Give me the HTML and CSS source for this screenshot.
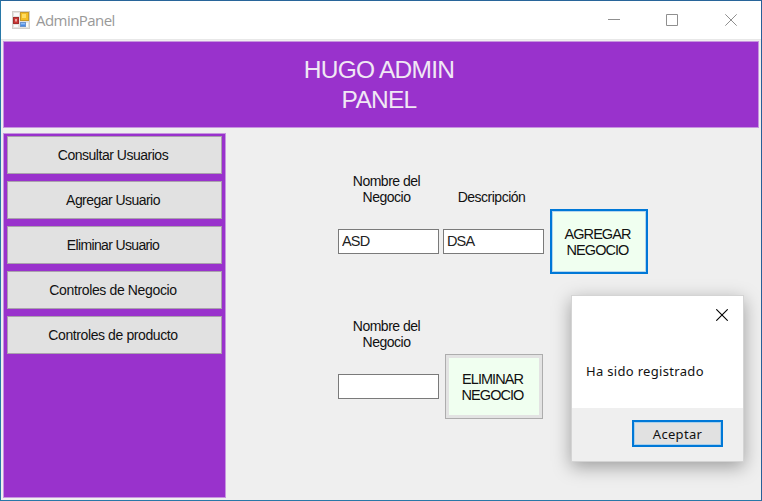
FILE: index.html
```html
<!DOCTYPE html>
<html lang="es">
<head>
<meta charset="utf-8">
<title>AdminPanel</title>
<link rel="stylesheet" href="styles.css">
</head>
<body>
<div class="window">
  <header class="titlebar">
    <svg class="app-icon" width="18" height="18" viewBox="0 0 18 18">
      <rect x=".5" y=".5" width="17" height="17" fill="#e6e3df" stroke="#d2cfcb"/>
      <path d="M2 2h5v3H2zM2 14h4v2H2zM14 12h2v4h-2z" fill="#fafafa"/>
      <rect x="8.500" y="1.500" width="8" height="8" fill="#f4bd25" stroke="#c79a29"/>
      <rect x="10" y="3" width="4" height="4" fill="#ffdc60"/>
      <rect x="1.500" y="6.500" width="5" height="6" fill="#c93634" stroke="#a42c2b"/>
      <rect x="3" y="8" width="2" height="2.500" fill="#eba5a0"/>
      <rect x="8.500" y="11.500" width="5" height="4" fill="#4b8be4" stroke="#6c94cc"/>
      <path d="M9 12h4v1.500H9z" fill="#8fbcf6"/>
    </svg>
    <span class="title">AdminPanel</span>
    <div class="controls">
      <svg width="12" height="12" viewBox="0 0 12 12"><path d="M0 5.500h12"/></svg>
      <svg width="12" height="12" viewBox="0 0 12 12"><path d="M.5.5h11v11H.5z"/></svg>
      <svg width="12" height="12" viewBox="0 0 12 12"><path d="M.3.3l11.400 11.400M11.700.3L.3 11.700"/></svg>
    </div>
  </header>
  <div class="banner"><h1>HUGO ADMIN<br>PANEL</h1></div>
  <div class="body">
    <nav class="sidebar">
      <button class="nav-btn consult">Consultar Usuarios</button>
      <button class="nav-btn add">Agregar Usuario</button>
      <button class="nav-btn remove">Eliminar Usuario</button>
      <button class="nav-btn business">Controles de Negocio</button>
      <button class="nav-btn product">Controles de producto</button>
    </nav>
    <main class="content">
      <section class="form-row">
        <label class="field"><span class="label">Nombre del<br>Negocio</span><input type="text" value="ASD"></label>
        <label class="field"><span class="label">Descripción</span><input type="text" value="DSA"></label>
        <button class="action focused">AGREGAR<br>NEGOCIO</button>
      </section>
      <section class="form-row">
        <label class="field"><span class="label">Nombre del<br>Negocio</span><input type="text"></label>
        <button class="action">ELIMINAR<br>NEGOCIO</button>
      </section>
    </main>
  </div>
  <div class="dialog" role="dialog">
    <div class="dialog-main">
      <svg class="dialog-close" width="12" height="12" viewBox="0 0 12 12"><path d="M.3.3l11.400 11.400M11.700.3L.3 11.700"/></svg>
      <p>Ha sido registrado</p>
    </div>
    <div class="dialog-footer"><button class="accept">Aceptar</button></div>
  </div>
</div>
</body>
</html>
```
FILE: styles.css
```css
* { box-sizing: border-box; }
body { margin: 0; overflow: hidden; font-family: "Liberation Sans", Arial, sans-serif; color: #111; }
button { font: inherit; color: inherit; border-radius: 0; padding: 0; }
.window {
  position: relative; width: 762px; height: 501px; overflow: hidden;
  display: flex; flex-direction: column; background: #efefef;
  border: 1px solid #2878a8; border-top-color: #28659a; border-right-color: #285f98;
}
.titlebar { height: 39px; flex: none; display: flex; align-items: center; background: #fff; padding: 0 24px 0 11px; border-bottom: 1px solid #e8e8e8; }
.app-icon { margin-top: -1px; }
.title { margin-left: 6px; margin-top: -1px; font: 15px "Open Sans", sans-serif; letter-spacing: -.55px; color: #999; }
.controls { margin-left: auto; display: flex; gap: 46px; }
.controls svg { fill: none; stroke: #8f8f8f; stroke-width: 1; }
.controls svg:nth-child(2) { margin-right: 1px; }
.banner {
  height: 87px; flex: none; margin: 1px 2px 0 2px; padding: 13px 4px 0 0;
  background: #9932cc; border: 1px solid #c795df; text-align: center;
}
.banner h1 { margin: 0; font-size: 24.500px; line-height: 30px; font-weight: 400; letter-spacing: -.75px; color: #f0e8f4; }
.body { flex: 1; display: flex; padding: 5px 0 2px 2px; min-height: 0; }
.sidebar {
  width: 223px; flex: none; display: flex; flex-direction: column; gap: 7px;
  background: #9932cc; border: 1px solid #c795df; padding: 2px 3px;
}
.nav-btn { height: 38px; flex: none; background: #e1e1e1; border: 1px solid #aaa1ad; font-size: 14px; padding: 0 3px 0 0; }
.consult { letter-spacing: -.48px; }
.add { letter-spacing: -.54px; }
.remove { letter-spacing: -.64px; }
.business { letter-spacing: -.36px; }
.product { letter-spacing: -.4px; }
.content { flex: 1; padding: 40px 0 0 112px; display: flex; flex-direction: column; gap: 44px; }
.form-row { display: flex; height: 101px; align-items: flex-start; }
.field { width: 101px; margin-right: 4px; display: flex; flex-direction: column; }
.label { height: 32px; margin-bottom: 24px; display: flex; align-items: flex-end; justify-content: center; text-align: center; font-size: 14px; line-height: 16px; letter-spacing: -.5px; padding-right: 4px; }
.field input { width: 101px; height: 25px; border: 1px solid #7a7a7a; background: #fff; padding: 0 3px 2px; font: 14.500px "Liberation Sans", Arial, sans-serif; letter-spacing: -.85px; color: #222; outline: 0; }
.action { width: 98px; height: 65px; margin: 36px 0 0 2px; background: #f0fff0; border: 1px solid #adadad; box-shadow: inset 0 0 0 3px #e3e3e3; font-size: 14.500px; line-height: 16px; letter-spacing: -.95px; padding-right: 3px; }
.focused { border: 2px solid #0078d7; box-shadow: inset 0 0 0 1px #b5d5ed; }
.dialog {
  position: absolute; left: 571px; top: 295px; width: 171px; height: 165px;
  display: flex; flex-direction: column; background: #efefef;
  box-shadow: 0 0 0 1px #d4d4d4, 0 5px 17px 1px rgba(0,0,0,.34);
}
.dialog-main { height: 112px; background: #fff; padding: 13px 14px; display: flex; flex-direction: column; }
.dialog-close { align-self: flex-end; margin-right: 1px; stroke: #000; fill: none; stroke-width: 1.100; }
.dialog p { margin: 40px 0 0; font: 13px/20px "Noto Sans", sans-serif; letter-spacing: .32px; white-space: nowrap; }
.dialog-footer { flex: 1; display: flex; justify-content: flex-end; padding: 12px 20px 0; }
.accept { width: 91px; height: 27px; border: 2px solid #0078d7; background: #e1e1e1; box-shadow: inset 0 0 0 1px #a8cfeb; font: 13px/20px "Noto Sans", sans-serif; letter-spacing: .3px; }
```
